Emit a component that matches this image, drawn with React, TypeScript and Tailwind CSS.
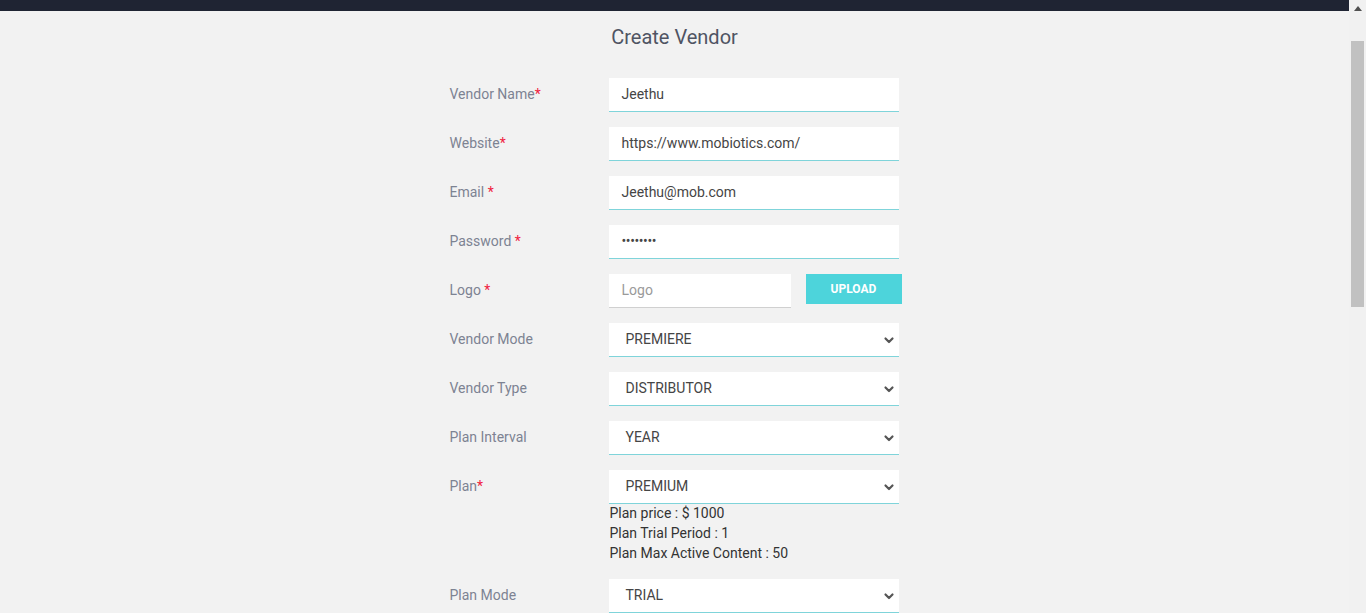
import React from "react";

const Star = () => <span className="text-[#f0213f]">*</span>;

function Chevron() {
  return (
    <svg width="12" height="12" viewBox="0 0 12 12" className="absolute right-[4px] top-1/2 -translate-y-1/2">
      <path d="M2.5 4.5 L6 8 L9.5 4.5" fill="none" stroke="#555" strokeWidth="2.2" strokeLinecap="round" strokeLinejoin="round" />
    </svg>
  );
}

function Row({ label, children }: { label: React.ReactNode; children: React.ReactNode }) {
  return (
    <div className="flex items-start">
      <div className="w-[159px] shrink-0 h-[33px] flex items-center text-[14px] text-[#7d8392]">{label}</div>
      <div>{children}</div>
    </div>
  );
}

function TextBox({ value, placeholder, width = "w-[290px]", border = "border-[#7fd4da]", extra = "" }: { value?: string; placeholder?: string; width?: string; border?: string; extra?: string }) {
  return (
    <div className={`${width} h-[34px] bg-white border-b ${border} flex items-center pl-[13px] text-[14px]`}>
      {value ? <span className={`text-[#454545] ${extra}`}>{value}</span> : <span className="text-[#9a9a9a]">{placeholder}</span>}
    </div>
  );
}

function Select({ value }: { value: string }) {
  return (
    <div className="relative w-[290px] h-[34px] bg-white border-b border-[#7fd4da] flex items-center pl-[17px] text-[14px] text-[#454545]">
      {value}
      <Chevron />
    </div>
  );
}

export default function App() {
  return (
    <div className="h-[613px] overflow-hidden flex bg-[#f2f2f2]" style={{ fontFamily: "Roboto, 'Liberation Sans', sans-serif" }}>
      <div className="flex-1">
        <div className="h-[11px] bg-[#1f2433]" />
        <h1 className="text-center text-[20px] text-[#4f5463] mt-[14px] leading-[24px]">Create Vendor</h1>
        <div className="w-[452px] mx-auto pl-[1px] mt-[29px] flex flex-col gap-[15px]">
          <Row label={<span>Vendor Name<Star /></span>}>
            <TextBox value="Jeethu" />
          </Row>
          <Row label={<span>Website<Star /></span>}>
            <TextBox value="https://www.mobiotics.com/" />
          </Row>
          <Row label={<span>Email <Star /></span>}>
            <TextBox value="Jeethu@mob.com" />
          </Row>
          <Row label={<span>Password <Star /></span>}>
            <TextBox value="••••••••" extra="tracking-[-0.4px]" />
          </Row>
          <Row label={<span>Logo <Star /></span>}>
            <div className="flex items-start gap-[15px]">
              <TextBox placeholder="Logo" width="w-[182px]" border="border-[#d0d0d0]" />
              <button className="w-[96px] h-[30px] pb-[1px] bg-[#4dd4db] text-white text-[12px] font-bold">UPLOAD</button>
            </div>
          </Row>
          <Row label="Vendor Mode">
            <Select value="PREMIERE" />
          </Row>
          <Row label="Vendor Type">
            <Select value="DISTRIBUTOR" />
          </Row>
          <Row label="Plan Interval">
            <Select value="YEAR" />
          </Row>
          <Row label={<span>Plan<Star /></span>}>
            <Select value="PREMIUM" />
            <div className="pl-[1px] -mt-[1px] pb-[1px] text-[14px] leading-[20px] text-[#333]">
              <div>Plan price : $ 1000</div>
              <div>Plan Trial Period : 1</div>
              <div>Plan Max Active Content : 50</div>
            </div>
          </Row>
          <Row label="Plan Mode">
            <Select value="TRIAL" />
          </Row>
        </div>
      </div>
      <div className="w-[17px] h-full bg-[#f1f1f1] flex flex-col items-center">
        <div className="h-[17px] w-full flex items-center justify-center">
          <svg width="8" height="5" viewBox="0 0 8 5">
            <path d="M0 5 L4 0 L8 5 Z" fill="#505050" />
          </svg>
        </div>
        <div className="mt-[24px] w-[13px] h-[266px] bg-[#c1c1c1]" />
      </div>
    </div>
  );
}
